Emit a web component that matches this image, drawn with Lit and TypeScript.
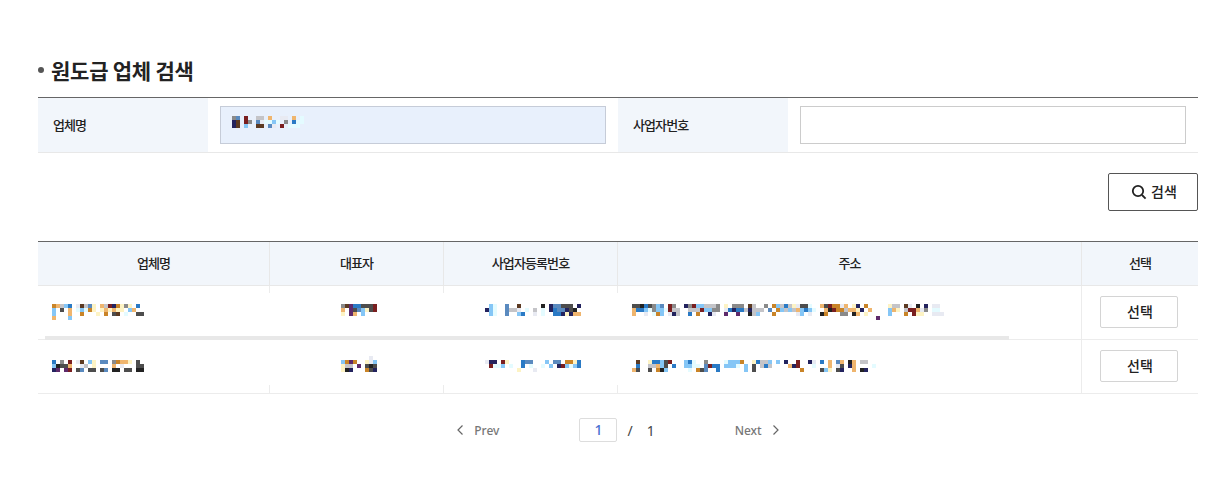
import { LitElement, html, css, svg } from 'lit';
import { customElement } from 'lit/decorators.js';

// colours of the blurred (mosaic) text, one letter per 4px block
const palette: Record<string, string> = {
  b: '#2a7ac5',
  l: '#85c6f6',
  c: '#e4fbff',
  o: '#c98428',
  t: '#efb56e',
  y: '#fdf3c4',
  k: '#222222',
  g: '#8a8a8a',
  G: '#4d4d4d',
  s: '#c4c4c8',
  r: '#7a1f20',
  p: '#5e2a6b',
  n: '#23235e',
  w: '#5c3a22',
  m: '#5a8abf',
  e: '#e8eaf2',
};

const mosaic = (rows: string[]) => {
  const w = Math.max(...rows.map((r) => r.length)) * 4;
  const h = rows.length * 4;
  return html`<svg class="mosaic" width=${w} height=${h} viewBox="0 0 ${w} ${h}" shape-rendering="crispEdges">
    ${rows.map((row, y) =>
      [...row].map((ch, x) =>
        palette[ch] ? svg`<rect x=${x * 4} y=${y * 4} width="4" height="4" fill=${palette[ch]}></rect>` : null
      )
    )}
  </svg>`;
};

const inputText = ['gm.r..ss.t..ee.t.c', 'nw.rg.mecclc.g.bcc', 'nw.l..ww.me.r.ccc.'];

const companies = [
  {
    name: [
      'otslb.ewsmy.tsrnoygy.b.',
      'l.G.t.clcoy.ytytyy.lt..',
      'l...t..o...y.o.Gw.c..GG',
      't...l..................',
    ],
    rep: ['gwpbbGGGr', 't.pGmlyGr', 'y.pt.l...', '.........'],
    reg: [
      '.lc..m..w.....k.nmmGGG.n',
      'nlc..msse.c.s.c.nbmmnGk.',
      '.lc..m..lb..e.c..bbnyntt',
      '........................',
    ],
    addr: [
      'GGkbGglm.rg..ngrllsssg.y.ggg.ws..g.olsbsyeGGc..tGrooet.yn.o.....yss.we.k.n.ee..',
      'tbblcgllcrss..sssrllgg.ebnbbsnsss.m.olslstlblc..tkroosttyn.t....lty.srrteg.cc..'.slice(0, 79),
      't..e.col.ens..b.o..ne..p..p..ksl...o.....el.e..ko...gg.kt.y.....l...o.ryy..eee.'.slice(0, 79),
      '.............................................................p.................',
    ],
  },
  {
    name: [
      '.......................',
      'b.g.r.ew.ly.mm.gotty.G.',
      'lkGGt..es.y....t.e...GG',
      'np.pr.Gm.GG.Gm.kk.GG.kk',
      '.......................',
    ],
    rep: ['.......e.', 'lopo..yel', 'yss.p.GkG', 'ykn...oGn', '.........'],
    reg: [
      '........................',
      'enn.ry...bmm...l.mm.ooyb',
      '.rccl.c..b.c..c.l.nrlclb',
      '........y...e...........',
      '........................',
    ],
    addr: [
      '.............................................................',
      '.w..ybblGr...lbc..g....clllo..ybssl.l.n..r..ne.b.t.mt.kt.ss..',
      '.b..sstlG.b..llcc.mrbb.lllc.l.G.sbs....tnr...c...t.eG.nt....c',
      'tG..G.okl.....c.oGm..b......l.G...........o....Gly.Gn..t.kn..',
      '.............................................................',
    ],
  },
];

@customElement('app-root')
export class AppRoot extends LitElement {
  static styles = css`
    :host {
      display: block;
      font-family: 'Noto Sans CJK KR', 'Noto Sans', sans-serif;
      color: #222;
      background: #fff;
      height: 500px;
    }
    .page {
      width: 1160px;
      margin-left: 38px;
      padding-top: 54px;
    }
    .title {
      display: flex;
      align-items: center;
      gap: 7px;
      height: 32px;
      margin: 0 0 11px;
      font-size: 21px;
      font-weight: 700;
      letter-spacing: -0.25px;
      color: #222;
    }
    .title::before {
      content: '';
      width: 6px;
      height: 6px;
      border-radius: 50%;
      background: #555;
    }
    .search {
      display: grid;
      grid-template-columns: 170px 1fr 170px 1fr;
      border-top: 1px solid #666;
      border-bottom: 1px solid #e8e8e8;
      height: 56px;
      box-sizing: border-box;
    }
    .label {
      display: flex;
      align-items: center;
      padding: 0 0 2px 15px;
      background: #f2f6fb;
      font-size: 13px;
      font-weight: 500;
      letter-spacing: -0.9px;
    }
    .cell {
      padding: 8px 12px;
    }
    .field {
      box-sizing: border-box;
      width: 100%;
      height: 38px;
      padding: 9px 11px 0;
      border: 1px solid #cccccc;
      background: #fff;
    }
    .field.filled {
      background: #e8f0fc;
      border-color: #c6ccd8;
    }
    .actions {
      display: flex;
      justify-content: flex-end;
      margin-top: 20px;
    }
    .search-btn {
      display: flex;
      align-items: center;
      justify-content: center;
      gap: 4px;
      box-sizing: border-box;
      width: 90px;
      height: 38px;
      padding: 0 0 0 2px;
      border: 1px solid #555;
      border-radius: 2px;
      background: #fff;
      color: #222;
      font: 500 14px 'Noto Sans CJK KR', sans-serif;
    }
    .search-btn span {
      padding-bottom: 2px;
    }
    .table-wrap {
      position: relative;
      margin-top: 30px;
    }
    table {
      width: 100%;
      table-layout: fixed;
      border-collapse: separate;
      border-spacing: 0;
      border-top: 1px solid #666;
    }
    th {
      height: 44px;
      padding: 0 0 2px;
      box-sizing: border-box;
      background: #f2f6fb;
      border-bottom: 1px solid #e8e8e8;
      border-right: 1px solid #e8e8e8;
      font-size: 13px;
      font-weight: 500;
      letter-spacing: -0.9px;
    }
    th:last-child {
      border-right: 0;
    }
    td {
      height: 54px;
      padding: 0 0 1px;
      box-sizing: border-box;
      border-bottom: 1px solid #ececec;
    }
    td.left {
      padding-left: 14px;
    }
    td.mid {
      padding-left: 3px;
    }
    td.action {
      padding-right: 2px;
    }
    td.divided {
      border-right: 1px solid #ececec;
    }
    tr.first td.stub {
      background: linear-gradient(#ececec, #ececec) right top / 1px 7px no-repeat;
    }
    tr.last td.stub {
      background: linear-gradient(#ececec, #ececec) right bottom / 1px 8px no-repeat;
    }
    .mosaic {
      display: block;
    }
    td.mid .mosaic {
      margin: 0 auto;
    }
    .pick {
      display: block;
      width: 78px;
      height: 32px;
      margin: 0 auto;
      padding: 0 0 3px 2px;
      border: 1px solid #d4d4d4;
      border-radius: 2px;
      background: #fff;
      color: #222;
      font: 500 14px 'Noto Sans CJK KR', sans-serif;
    }
    .scrollbar {
      position: absolute;
      left: 7px;
      top: 95px;
      width: 964px;
      height: 4px;
      background: #e8e8e8;
    }
    .pager {
      display: flex;
      justify-content: center;
      align-items: center;
      gap: 80px;
      margin-top: 24px;
      height: 24px;
      font-family: 'Noto Sans', sans-serif;
      font-size: 12px;
      font-weight: 500;
      color: #777;
    }
    .nav {
      display: flex;
      align-items: center;
      gap: 11px;
    }
    .pages {
      display: flex;
      align-items: center;
      font-size: 14px;
      font-weight: 400;
      color: #444;
    }
    .current {
      box-sizing: border-box;
      width: 38px;
      height: 24px;
      line-height: 22px;
      margin-right: 10px;
      text-align: center;
      border: 1px solid #dddddd;
      border-radius: 2px;
      font-weight: 500;
      color: #4a6fd0;
    }
    .total {
      margin-left: 14px;
    }
  `;

  render() {
    return html`
      <div class="page">
        <h2 class="title">원도급 업체 검색</h2>
        <div class="search">
          <div class="label">업체명</div>
          <div class="cell"><div class="field filled">${mosaic(inputText)}</div></div>
          <div class="label">사업자번호</div>
          <div class="cell"><div class="field"></div></div>
        </div>
        <div class="actions">
          <button class="search-btn">
            <svg width="16" height="16" viewBox="0 0 16 16" fill="none" stroke="#222" stroke-width="1.8">
              <circle cx="7" cy="7" r="5.2"></circle>
              <path d="M11 11l3.6 3.6"></path>
            </svg>
            <span>검색</span>
          </button>
        </div>
        <div class="table-wrap">
          <table>
            <colgroup>
              <col style="width:232px" />
              <col style="width:174px" />
              <col style="width:174px" />
              <col style="width:464px" />
              <col style="width:116px" />
            </colgroup>
            <thead>
              <tr>
                <th>업체명</th>
                <th>대표자</th>
                <th>사업자등록번호</th>
                <th>주소</th>
                <th>선택</th>
              </tr>
            </thead>
            <tbody>
              ${companies.map(
                (c, i) => html`
                  <tr class=${i === 0 ? 'first' : 'last'}>
                    <td class="left stub">${mosaic(c.name)}</td>
                    <td class="mid stub">${mosaic(c.rep)}</td>
                    <td class="mid stub">${mosaic(c.reg)}</td>
                    <td class="left divided">${mosaic(c.addr)}</td>
                    <td class="action"><button class="pick">선택</button></td>
                  </tr>
                `
              )}
            </tbody>
          </table>
          <div class="scrollbar"></div>
        </div>
        <div class="pager">
          <div class="nav">
            <svg width="6" height="10" viewBox="0 0 6 10" fill="none" stroke="#666" stroke-width="1.2">
              <path d="M5.5 .5L1 5l4.5 4.5"></path>
            </svg>
            Prev
          </div>
          <div class="pages">
            <span class="current">1</span>
            <span>/</span>
            <span class="total">1</span>
          </div>
          <div class="nav">
            Next
            <svg width="6" height="10" viewBox="0 0 6 10" fill="none" stroke="#666" stroke-width="1.2">
              <path d="M.5 .5L5 5 .5 9.5"></path>
            </svg>
          </div>
        </div>
      </div>
    `;
  }
}
